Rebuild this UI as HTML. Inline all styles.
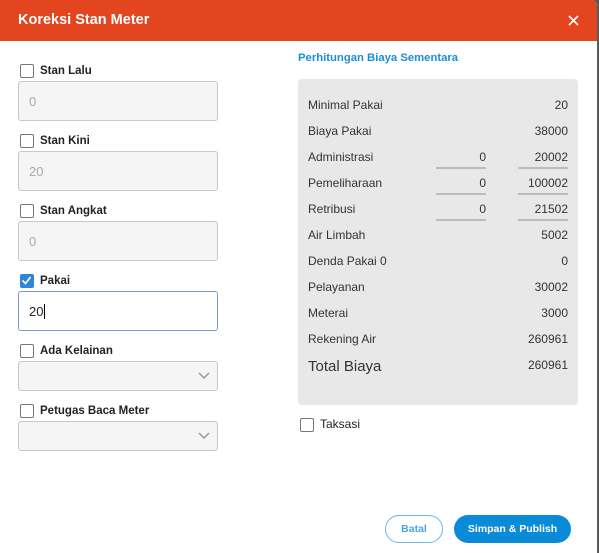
<!DOCTYPE html>
<html><head><meta charset="utf-8"><style>
*{margin:0;padding:0;box-sizing:border-box}
body{width:599px;height:553px;background:#5a5a5a;font-family:"Liberation Sans",sans-serif;position:relative;overflow:hidden}
.dlg{position:absolute;left:0;top:0;width:597px;height:553px;background:#fff;border-top-right-radius:6px;overflow:hidden}
.hdr{position:absolute;left:0;top:0;width:597px;height:41px;background:#e3461e;color:#fff}
.hdr .t{position:absolute;left:18px;top:12px;font-size:14.5px;font-weight:bold}
.x{position:absolute;left:568px;top:15px}
.a{position:absolute}
.cb{position:absolute;width:14px;height:14px;border:1.5px solid #777;border-radius:2px;background:#fff}
.lbl{position:absolute;font-size:11.5px;color:#222;font-weight:bold;margin-top:2px}
.inp{position:absolute;left:18px;width:200px;height:40px;border:1px solid #c8c8c8;border-radius:3px;background:#f5f5f5;color:#aaa;font-size:13px;padding:12px 10px}
.sel{position:absolute;left:18px;width:200px;height:30px;border:1px solid #c8c8c8;border-radius:3px;background:#f5f5f5}
.sel svg{position:absolute;right:7px;top:10px}
.panel{position:absolute;left:298px;top:79px;width:280px;height:326px;background:#e8e8e8;border-radius:4px}
.r{position:absolute;left:10px;font-size:12px;color:#333}
.v{position:absolute;right:10px;font-size:12px;color:#333;text-align:right}
.m{position:absolute;left:138px;width:50px;text-align:right;font-size:12px;color:#333;border-bottom:2px solid #bbb;padding-bottom:3px}
.n{position:absolute;left:220px;width:50px;text-align:right;font-size:12px;color:#333;border-bottom:2px solid #bbb;padding-bottom:3px}
.btn{position:absolute;height:28px;border-radius:14px;font-size:10.5px;font-weight:bold;text-align:center;line-height:26px}
</style></head><body>
<div class="dlg">
<div class="hdr"><div class="t">Koreksi Stan Meter</div>
<svg class="x" width="11" height="11" viewBox="0 0 11 11"><path d="M1 1L10 10M10 1L1 10" stroke="#fff" stroke-width="1.6"/></svg></div>

<div class="cb" style="left:20px;top:64px"></div><div class="lbl" style="left:40px;top:63px">Stan Lalu</div>
<div class="inp" style="top:81px">0</div>
<div class="cb" style="left:20px;top:134px"></div><div class="lbl" style="left:40px;top:133px">Stan Kini</div>
<div class="inp" style="top:151px">20</div>
<div class="cb" style="left:20px;top:204px"></div><div class="lbl" style="left:40px;top:203px">Stan Angkat</div>
<div class="inp" style="top:221px">0</div>
<div class="cb" style="left:20px;top:274px;background:#2f86d6;border-color:#2f86d6"><svg width="11" height="11" viewBox="0 0 11 11" style="position:absolute;left:0;top:0"><path d="M1.5 5.5L4.5 8.5L9.5 2" stroke="#fff" stroke-width="1.6" fill="none"/></svg></div><div class="lbl" style="left:40px;top:273px">Pakai</div>
<div class="inp" style="top:291px;background:#fff;border-color:#7a9cc6;color:#222">20<span style="border-left:1px solid #000;margin-left:1px"></span></div>
<div class="cb" style="left:20px;top:344px"></div><div class="lbl" style="left:40px;top:343px">Ada Kelainan</div>
<div class="sel" style="top:361px"><svg width="12" height="8" viewBox="0 0 12 8"><path d="M1 1L6 6L11 1" stroke="#999" stroke-width="1.5" fill="none"/></svg></div>
<div class="cb" style="left:20px;top:404px"></div><div class="lbl" style="left:40px;top:403px">Petugas Baca Meter</div>
<div class="sel" style="top:421px"><svg width="12" height="8" viewBox="0 0 12 8"><path d="M1 1L6 6L11 1" stroke="#999" stroke-width="1.5" fill="none"/></svg></div>

<div class="a" style="left:298px;top:52px;font-size:11.3px;font-weight:bold;color:#1a8fd8">Perhitungan Biaya Sementara</div>
<div class="panel">
<div class="r" style="top:19px">Minimal Pakai</div><div class="v" style="top:19px">20</div>
<div class="r" style="top:45px">Biaya Pakai</div><div class="v" style="top:45px">38000</div>
<div class="r" style="top:71px">Administrasi</div><div class="m" style="top:71px">0</div><div class="n" style="top:71px">20002</div>
<div class="r" style="top:97px">Pemeliharaan</div><div class="m" style="top:97px">0</div><div class="n" style="top:97px">100002</div>
<div class="r" style="top:123px">Retribusi</div><div class="m" style="top:123px">0</div><div class="n" style="top:123px">21502</div>
<div class="r" style="top:149px">Air Limbah</div><div class="v" style="top:149px">5002</div>
<div class="r" style="top:175px">Denda Pakai 0</div><div class="v" style="top:175px">0</div>
<div class="r" style="top:201px">Pelayanan</div><div class="v" style="top:201px">30002</div>
<div class="r" style="top:227px">Meterai</div><div class="v" style="top:227px">3000</div>
<div class="r" style="top:253px">Rekening Air</div><div class="v" style="top:253px">260961</div>
<div class="r" style="top:279px;font-size:15px">Total Biaya</div><div class="v" style="top:279px">260961</div>
</div>
<div class="cb" style="left:300px;top:418px"></div><div class="a" style="left:320px;top:417px;font-size:12px;color:#222">Taksasi</div>

<div class="btn" style="left:385px;top:515px;width:58px;border:1px solid #6ab8ea;color:#4aa6e2;background:#fff">Batal</div>
<div class="btn" style="left:454px;top:515px;width:117px;background:#0a8bd8;color:#fff;line-height:28px">Simpan &amp; Publish</div>
</div>
</body></html>
